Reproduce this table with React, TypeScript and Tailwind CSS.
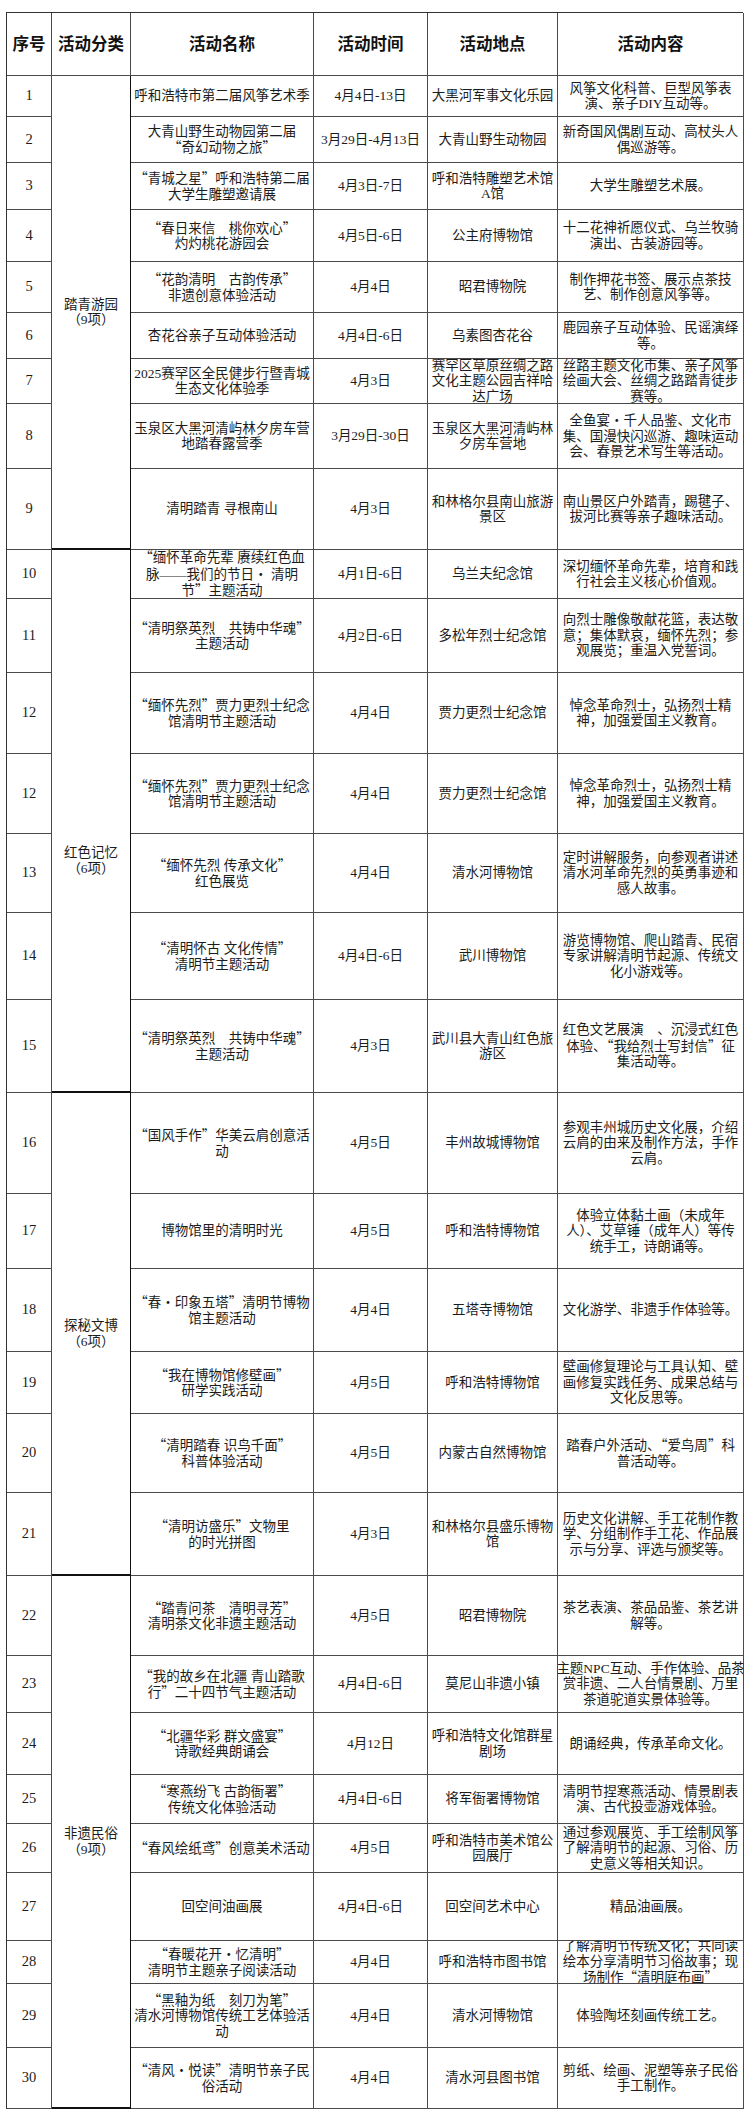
import React from "react"

type Row = [string, string, string, string, string]

const groups: { label: string; rows: string; labelPad: string; items: Row[] }[] = [
  {
    label: "踏青游园\n（9项）",
    rows: "grid-rows-[41px_46px_47px_52px_51px_46px_45px_65px_81px]",
    labelPad: "",
    items: [
      ["1", "呼和浩特市第二届风筝艺术季", "4月4日-13日", "大黑河军事文化乐园", "风筝文化科普、巨型风筝表\n演、亲子DIY互动等。"],
      ["2", "大青山野生动物园第二届\n“奇幻动物之旅”", "3月29日-4月13日", "大青山野生动物园", "新奇国风偶剧互动、高杖头人\n偶巡游等。"],
      ["3", "“青城之星”呼和浩特第二届\n大学生雕塑邀请展", "4月3日-7日", "呼和浩特雕塑艺术馆\nA馆", "大学生雕塑艺术展。"],
      ["4", "“春日来信　桃你欢心”\n灼灼桃花游园会", "4月5日-6日", "公主府博物馆", "十二花神祈愿仪式、乌兰牧骑\n演出、古装游园等。"],
      ["5", "“花韵清明　古韵传承”\n非遗创意体验活动", "4月4日", "昭君博物院", "制作押花书签、展示点茶技\n艺、制作创意风筝等。"],
      ["6", "杏花谷亲子互动体验活动", "4月4日-6日", "乌素图杏花谷", "鹿园亲子互动体验、民谣演绎\n等。"],
      ["7", "2025赛罕区全民健步行暨青城\n生态文化体验季", "4月3日", "赛罕区草原丝绸之路\n文化主题公园吉祥哈\n达广场", "丝路主题文化市集、亲子风筝\n绘画大会、丝绸之路踏青徒步\n赛等。"],
      ["8", "玉泉区大黑河清屿林夕房车营\n地踏春露营季", "3月29日-30日", "玉泉区大黑河清屿林\n夕房车营地", "全鱼宴·千人品鉴、文化市\n集、国漫快闪巡游、趣味运动\n会、春景艺术写生等活动。"],
      ["9", "清明踏青 寻根南山", "4月3日", "和林格尔县南山旅游\n景区", "南山景区户外踏青，踢毽子、\n拔河比赛等亲子趣味活动。"],
    ],
  },
  {
    label: "红色记忆\n（6项）",
    rows: "grid-rows-[49px_74px_81px_80px_79px_87px_93px]",
    labelPad: "pt-[80px]",
    items: [
      ["10", "“缅怀革命先辈 赓续红色血\n脉——我们的节日· 清明\n节”主题活动", "4月1日-6日", "乌兰夫纪念馆", "深切缅怀革命先辈，培育和践\n行社会主义核心价值观。"],
      ["11", "“清明祭英烈　共铸中华魂”\n主题活动", "4月2日-6日", "多松年烈士纪念馆", "向烈士雕像敬献花篮，表达敬\n意；集体默哀，缅怀先烈；参\n观展览；重温入党誓词。"],
      ["12", "“缅怀先烈”贾力更烈士纪念\n馆清明节主题活动", "4月4日", "贾力更烈士纪念馆", "悼念革命烈士，弘扬烈士精\n神，加强爱国主义教育。"],
      ["12", "“缅怀先烈”贾力更烈士纪念\n馆清明节主题活动", "4月4日", "贾力更烈士纪念馆", "悼念革命烈士，弘扬烈士精\n神，加强爱国主义教育。"],
      ["13", "“缅怀先烈 传承文化”\n红色展览", "4月4日", "清水河博物馆", "定时讲解服务，向参观者讲述\n清水河革命先烈的英勇事迹和\n感人故事。"],
      ["14", "“清明怀古 文化传情”\n清明节主题活动", "4月4日-6日", "武川博物馆", "游览博物馆、爬山踏青、民宿\n专家讲解清明节起源、传统文\n化小游戏等。"],
      ["15", "“清明祭英烈　共铸中华魂”\n主题活动", "4月3日", "武川县大青山红色旅\n游区", "红色文艺展演　、沉浸式红色\n体验、“我给烈士写封信”征\n集活动等。"],
    ],
  },
  {
    label: "探秘文博\n（6项）",
    rows: "grid-rows-[101px_75px_83px_62px_79px_83px]",
    labelPad: "",
    items: [
      ["16", "“国风手作”华美云肩创意活\n动", "4月5日", "丰州故城博物馆", "参观丰州城历史文化展，介绍\n云肩的由来及制作方法，手作\n云肩。"],
      ["17", "博物馆里的清明时光", "4月5日", "呼和浩特博物馆", "体验立体黏土画（未成年\n人）、艾草锤（成年人）等传\n统手工，诗朗诵等。"],
      ["18", "“春·印象五塔”清明节博物\n馆主题活动", "4月4日", "五塔寺博物馆", "文化游学、非遗手作体验等。"],
      ["19", "“我在博物馆修壁画”\n研学实践活动", "4月5日", "呼和浩特博物馆", "壁画修复理论与工具认知、壁\n画修复实践任务、成果总结与\n文化反思等。"],
      ["20", "“清明踏春 识鸟千面”\n科普体验活动", "4月5日", "内蒙古自然博物馆", "踏春户外活动、“爱鸟周”科\n普活动等。"],
      ["21", "“清明访盛乐”文物里\n的时光拼图", "4月3日", "和林格尔县盛乐博物\n馆", "历史文化讲解、手工花制作教\n学、分组制作手工花、作品展\n示与分享、评选与颁奖等。"],
    ],
  },
  {
    label: "非遗民俗\n（9项）",
    rows: "grid-rows-[80px_57px_62px_49px_49px_68px_43px_64px_61px]",
    labelPad: "",
    items: [
      ["22", "“踏青问茶　清明寻芳”\n清明茶文化非遗主题活动", "4月5日", "昭君博物院", "茶艺表演、茶品品鉴、茶艺讲\n解等。"],
      ["23", "“我的故乡在北疆 青山踏歌\n行”二十四节气主题活动", "4月4日-6日", "莫尼山非遗小镇", "主题NPC互动、手作体验、品茶\n赏非遗、二人台情景剧、万里\n茶道驼道实景体验等。"],
      ["24", "“北疆华彩 群文盛宴”\n诗歌经典朗诵会", "4月12日", "呼和浩特文化馆群星\n剧场", "朗诵经典，传承革命文化。"],
      ["25", "“寒燕纷飞 古韵衙署”\n传统文化体验活动", "4月4日-6日", "将军衙署博物馆", "清明节捏寒燕活动、情景剧表\n演、古代投壶游戏体验。"],
      ["26", "“春风绘纸鸢”创意美术活动", "4月5日", "呼和浩特市美术馆公\n园展厅", "通过参观展览、手工绘制风筝\n了解清明节的起源、习俗、历\n史意义等相关知识。"],
      ["27", "回空间油画展", "4月4日-6日", "回空间艺术中心", "精品油画展。"],
      ["28", "“春暖花开·忆清明”\n清明节主题亲子阅读活动", "4月4日", "呼和浩特市图书馆", "了解清明节传统文化；共同读\n绘本分享清明节习俗故事；现\n场制作“清明庭布画”"],
      ["29", "“黑釉为纸　刻刀为笔”\n清水河博物馆传统工艺体验活\n动", "4月4日", "清水河博物馆", "体验陶坯刻画传统工艺。"],
      ["30", "“清风·悦读”清明节亲子民\n俗活动", "4月4日", "清水河县图书馆", "剪纸、绘画、泥塑等亲子民俗\n手工制作。"],
    ],
  },
]

const headers = ["序号", "活动分类", "活动名称", "活动时间", "活动地点", "活动内容"]

// quotes and dots read full width in the source, so they go to the CJK face
function Txt({ s }: { s: string }) {
  const parts = s.split(/([“”·])/)
  return (
    <div className="whitespace-pre">
      {parts.map((p, i) =>
        /^[“”·]$/.test(p) ? (
          <span key={i} className="font-['Noto_Sans_CJK_SC',sans-serif]">
            {p}
          </span>
        ) : (
          <React.Fragment key={i}>{p}</React.Fragment>
        )
      )}
    </div>
  )
}

const cell =
  "flex items-center justify-center overflow-hidden border-r border-b border-[#4a4a4a] text-center px-[2px]"

export default function App() {
  return (
    <div className="w-[750px] min-h-[2121px] bg-white pt-[12px] pl-[6px] font-['Liberation_Serif','Noto_Sans_CJK_SC',serif] text-[13.5px] leading-[15.5px] text-[#1c1c1c]">
      <div className="w-[737px] border-l border-t border-[#333]">
        {/* header */}
        <div className="grid grid-cols-[45px_79px_183px_114px_130px_186px] grid-rows-[63px]">
          {headers.map((h) => (
            <div
              key={h}
              className={`${cell} font-['Noto_Sans_CJK_SC',sans-serif] text-[16.5px] font-bold text-[#111]`}
            >
              {h}
            </div>
          ))}
        </div>

        {groups.map((g) => (
          <div key={g.label} className={`grid grid-cols-[45px_79px_183px_114px_130px_186px] ${g.rows}`}>
            <div
              className={`col-start-2 row-span-full flex items-center justify-center border-r border-b-2 border-[#111] text-center whitespace-pre ${g.labelPad}`}
            >
              {g.label}
            </div>
            {g.items.map((r, i) => (
              <React.Fragment key={i}>
                <div className={`${cell} col-start-1 text-[14.5px]`}>{r[0]}</div>
                <div className={`${cell} col-start-3`}>
                  <Txt s={r[1]} />
                </div>
                <div className={cell}>
                  <Txt s={r[2]} />
                </div>
                <div className={cell}>
                  <Txt s={r[3]} />
                </div>
                <div className={cell}>
                  <Txt s={r[4]} />
                </div>
              </React.Fragment>
            ))}
          </div>
        ))}
      </div>
    </div>
  )
}
